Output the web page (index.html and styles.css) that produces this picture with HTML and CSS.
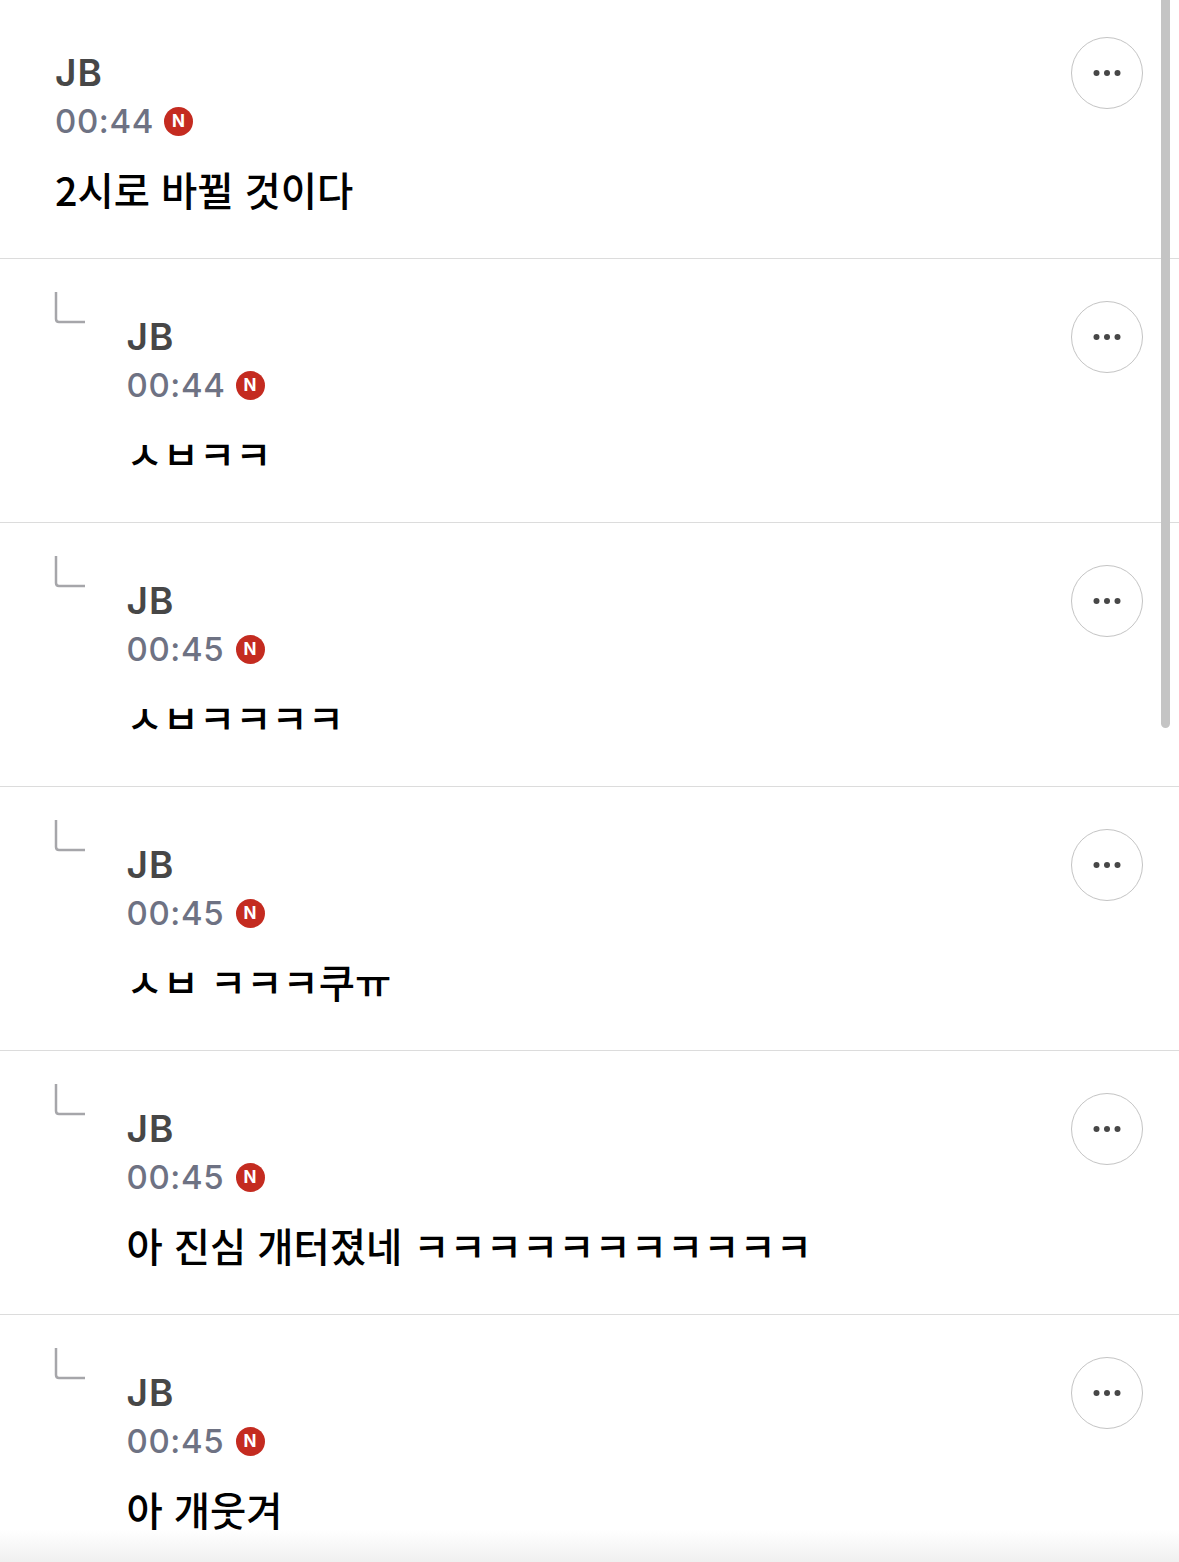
FILE: index.html
```html
<!DOCTYPE html>
<html lang="ko">
<head>
    <meta charset="UTF-8">
    <meta name="viewport" content="width=device-width, initial-scale=1.0">
    <title>댓글</title>
    <link rel="stylesheet" href="styles.css">
</head>
<body>

<div class="comment-list">
    <div class="comment">
        <div class="comment-body">
            <div class="name">JB</div>
            <div class="meta"><span class="time">00:44</span><span class="badge">N</span></div>
            <div class="message">2시로 바뀔 것이다</div>
        </div>
        <button class="more"><svg width="32" height="8" viewBox="0 0 32 8"><circle cx="5.5" cy="4" r="3"/><circle cx="16" cy="4" r="3"/><circle cx="26.5" cy="4" r="3"/></svg></button>
    </div>

    <div class="comment reply">
        <svg class="reply-icon" width="31" height="32" viewBox="0 0 31 32"><path d="M2 0V27Q2 30 5 30H31"/></svg>
        <div class="comment-body">
            <div class="name">JB</div>
            <div class="meta"><span class="time">00:44</span><span class="badge">N</span></div>
            <div class="message">ㅅㅂㅋㅋ</div>
        </div>
        <button class="more"><svg width="32" height="8" viewBox="0 0 32 8"><circle cx="5.5" cy="4" r="3"/><circle cx="16" cy="4" r="3"/><circle cx="26.5" cy="4" r="3"/></svg></button>
    </div>

    <div class="comment reply">
        <svg class="reply-icon" width="31" height="32" viewBox="0 0 31 32"><path d="M2 0V27Q2 30 5 30H31"/></svg>
        <div class="comment-body">
            <div class="name">JB</div>
            <div class="meta"><span class="time">00:45</span><span class="badge">N</span></div>
            <div class="message">ㅅㅂㅋㅋㅋㅋ</div>
        </div>
        <button class="more"><svg width="32" height="8" viewBox="0 0 32 8"><circle cx="5.5" cy="4" r="3"/><circle cx="16" cy="4" r="3"/><circle cx="26.5" cy="4" r="3"/></svg></button>
    </div>

    <div class="comment reply">
        <svg class="reply-icon" width="31" height="32" viewBox="0 0 31 32"><path d="M2 0V27Q2 30 5 30H31"/></svg>
        <div class="comment-body">
            <div class="name">JB</div>
            <div class="meta"><span class="time">00:45</span><span class="badge">N</span></div>
            <div class="message">ㅅㅂ ㅋㅋㅋ쿠ㅠ</div>
        </div>
        <button class="more"><svg width="32" height="8" viewBox="0 0 32 8"><circle cx="5.5" cy="4" r="3"/><circle cx="16" cy="4" r="3"/><circle cx="26.5" cy="4" r="3"/></svg></button>
    </div>

    <div class="comment reply">
        <svg class="reply-icon" width="31" height="32" viewBox="0 0 31 32"><path d="M2 0V27Q2 30 5 30H31"/></svg>
        <div class="comment-body">
            <div class="name">JB</div>
            <div class="meta"><span class="time">00:45</span><span class="badge">N</span></div>
            <div class="message">아 진심 개터졌네 ㅋㅋㅋㅋㅋㅋㅋㅋㅋㅋㅋ</div>
        </div>
        <button class="more"><svg width="32" height="8" viewBox="0 0 32 8"><circle cx="5.5" cy="4" r="3"/><circle cx="16" cy="4" r="3"/><circle cx="26.5" cy="4" r="3"/></svg></button>
    </div>

    <div class="comment reply">
        <svg class="reply-icon" width="31" height="32" viewBox="0 0 31 32"><path d="M2 0V27Q2 30 5 30H31"/></svg>
        <div class="comment-body">
            <div class="name">JB</div>
            <div class="meta"><span class="time">00:45</span><span class="badge">N</span></div>
            <div class="message">아 개웃겨</div>
        </div>
        <button class="more"><svg width="32" height="8" viewBox="0 0 32 8"><circle cx="5.5" cy="4" r="3"/><circle cx="16" cy="4" r="3"/><circle cx="26.5" cy="4" r="3"/></svg></button>
    </div>
</div>

<div class="scrollbar"></div>
<div class="bottom-fade"></div>

</body>
</html>
```

FILE: styles.css
```css
html, body {
    height: 100%;
}
body {
    margin: 0;
    overflow: hidden;
    position: relative;
    background-color: #fff;
    font-family: Inter, "Noto Sans CJK KR", sans-serif;
}
.comment-list {
    margin-top: -5px;
}
.comment {
    display: flex;
    align-items: flex-start;
    height: 230px;
    padding: 33px 36px 0 55px;
    border-bottom: 1px solid #dcdcdc;
}
.reply {
    padding-left: 54px;
}
.reply-icon {
    flex-shrink: 0;
    margin-right: 41.5px;
    fill: none;
    stroke: #a6a6aa;
    stroke-width: 2.5;
}
.comment-body {
    flex: 1;
    margin-top: 20px;
}
.name {
    padding-top: 1px;
    font-size: 37px;
    font-weight: 600;
    line-height: 48px;
    letter-spacing: 1px;
    color: #474747;
}
.meta {
    display: flex;
    align-items: center;
    height: 48px;
}
.time {
    width: 97px;
    font-size: 33px;
    font-weight: 500;
    color: #6e7283;
    letter-spacing: 0.6px;
    white-space: nowrap;
}
.badge {
    display: flex;
    align-items: center;
    justify-content: center;
    width: 29px;
    height: 29px;
    margin-left: 12px;
    border-radius: 50%;
    background-color: #c42b20;
    color: #fff;
    font-size: 17px;
    font-weight: 700;
}
.message {
    margin-top: 20px;
    font-size: 39.4px;
    font-weight: 500;
    line-height: 48px;
    color: #000;
    font-family: "Noto Sans CJK KR", sans-serif;
}
.more {
    flex-shrink: 0;
    display: flex;
    align-items: center;
    justify-content: center;
    width: 72px;
    height: 72px;
    margin-top: 9px;
    padding: 0;
    background: #fff;
    border: 1px solid #c4c4c4;
    border-radius: 50%;
}
.more svg {
    fill: #474747;
}
.scrollbar {
    position: absolute;
    top: 0;
    left: 1161px;
    width: 9px;
    height: 728px;
    background-color: #c4c4c4;
    border-radius: 0 0 5px 5px;
}
.bottom-fade {
    position: absolute;
    left: 0;
    right: 0;
    bottom: 0;
    height: 32px;
    background: linear-gradient(rgba(240, 240, 240, 0), #f0f0f0);
}
```
